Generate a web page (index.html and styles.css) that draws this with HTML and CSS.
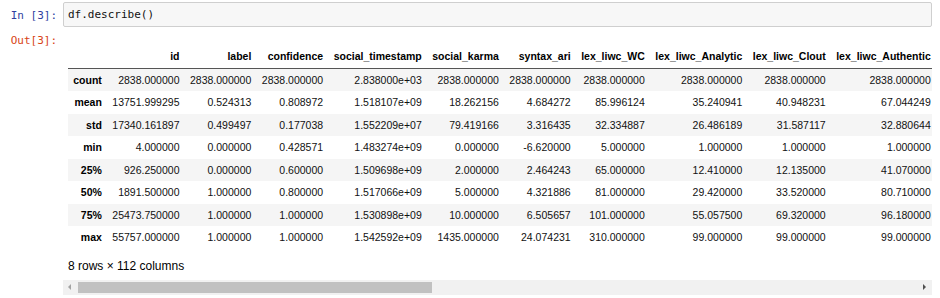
FILE: index.html
```html
<!DOCTYPE html>
<html lang="en">
<head>
  <meta charset="UTF-8">
  <title>df.describe()</title>
  <link rel="stylesheet" href="styles.css">
</head>
<body>
  <div class="cell">
    <div class="cell-row input-row">
      <div class="prompt in-prompt">In&nbsp;[3]:</div>
      <div class="input-area">df.describe()</div>
    </div>

    <div class="cell-row output-row">
      <div class="prompt out-prompt">Out[3]:</div>
      <div class="output-area">
        <div class="table-wrap">
          <table class="dataframe">
            <thead>
              <tr>
                <th></th>
                <th>id</th>
                <th>label</th>
                <th>confidence</th>
                <th>social_timestamp</th>
                <th>social_karma</th>
                <th>syntax_ari</th>
                <th>lex_liwc_WC</th>
                <th>lex_liwc_Analytic</th>
                <th>lex_liwc_Clout</th>
                <th>lex_liwc_Authentic</th>
              </tr>
            </thead>
            <tbody>
              <tr>
                <th>count</th>
                <td>2838.000000</td><td>2838.000000</td><td>2838.000000</td><td>2.838000e+03</td><td>2838.000000</td>
                <td>2838.000000</td><td>2838.000000</td><td>2838.000000</td><td>2838.000000</td><td>2838.000000</td>
              </tr>
              <tr>
                <th>mean</th>
                <td>13751.999295</td><td>0.524313</td><td>0.808972</td><td>1.518107e+09</td><td>18.262156</td>
                <td>4.684272</td><td>85.996124</td><td>35.240941</td><td>40.948231</td><td>67.044249</td>
              </tr>
              <tr>
                <th>std</th>
                <td>17340.161897</td><td>0.499497</td><td>0.177038</td><td>1.552209e+07</td><td>79.419166</td>
                <td>3.316435</td><td>32.334887</td><td>26.486189</td><td>31.587117</td><td>32.880644</td>
              </tr>
              <tr>
                <th>min</th>
                <td>4.000000</td><td>0.000000</td><td>0.428571</td><td>1.483274e+09</td><td>0.000000</td>
                <td>-6.620000</td><td>5.000000</td><td>1.000000</td><td>1.000000</td><td>1.000000</td>
              </tr>
              <tr>
                <th>25%</th>
                <td>926.250000</td><td>0.000000</td><td>0.600000</td><td>1.509698e+09</td><td>2.000000</td>
                <td>2.464243</td><td>65.000000</td><td>12.410000</td><td>12.135000</td><td>41.070000</td>
              </tr>
              <tr>
                <th>50%</th>
                <td>1891.500000</td><td>1.000000</td><td>0.800000</td><td>1.517066e+09</td><td>5.000000</td>
                <td>4.321886</td><td>81.000000</td><td>29.420000</td><td>33.520000</td><td>80.710000</td>
              </tr>
              <tr>
                <th>75%</th>
                <td>25473.750000</td><td>1.000000</td><td>1.000000</td><td>1.530898e+09</td><td>10.000000</td>
                <td>6.505657</td><td>101.000000</td><td>55.057500</td><td>69.320000</td><td>96.180000</td>
              </tr>
              <tr>
                <th>max</th>
                <td>55757.000000</td><td>1.000000</td><td>1.000000</td><td>1.542592e+09</td><td>1435.000000</td>
                <td>24.074231</td><td>310.000000</td><td>99.000000</td><td>99.000000</td><td>99.000000</td>
              </tr>
            </tbody>
          </table>
        </div>

        <p class="shape">8 rows × 112 columns</p>

        <!-- horizontal scrollbar of the output area -->
        <div class="hscroll">
          <span class="arrow arrow-left"></span>
          <div class="track">
            <div class="thumb"></div>
          </div>
          <span class="arrow arrow-right"></span>
        </div>
      </div>
    </div>
  </div>
</body>
</html>
```

FILE: styles.css
```css
body {
  margin: 0;
  background-color: #fff;
  font-family: 'Liberation Sans', Arial, sans-serif;
  color: #000;
}
.cell {
  padding: 2px 8px 0 0;
}
.cell-row {
  display: flex;
  align-items: flex-start;
}
.prompt {
  width: 57px;
  flex: none;
  padding-right: 6px;
  text-align: right;
  font-family: 'DejaVu Sans Mono', 'Liberation Mono', monospace;
  font-size: 11px;
  line-height: 13px;
}
.in-prompt {
  color: #303f9f;
  padding-top: 7px;
}
.out-prompt {
  color: #d84315;
  padding-top: 6px;
}
.input-area {
  flex: 1;
  height: 25px;
  box-sizing: border-box;
  padding: 5px 4px;
  background-color: #f7f7f7;
  border: 1px solid #cfcfcf;
  border-radius: 2px;
  font-family: 'DejaVu Sans Mono', 'Liberation Mono', monospace;
  font-size: 11px;
  line-height: 13px;
  color: #111;
}
.output-row {
  margin-top: 1px;
}
.output-area {
  flex: 1;
  min-width: 0;
  overflow: hidden;
}
.table-wrap {
  padding: 17px 0 0 5px;
}
.dataframe {
  border-collapse: collapse;
  border-spacing: 0;
  font-size: 10.5px;
  color: #111;
}
.dataframe th,
.dataframe td {
  text-align: right;
  vertical-align: middle;
  padding: 0.5em 0.5em;
  line-height: normal;
  white-space: nowrap;
}
.dataframe th {
  font-weight: bold;
  color: #000;
}
.dataframe thead {
  border-bottom: 1px solid #555;
}
.dataframe tbody tr:nth-child(odd) {
  background-color: #f5f5f5;
}
.shape {
  margin: 10px 0 0 5px;
  font-size: 12px;
  line-height: 14px;
}
.hscroll {
  display: flex;
  align-items: center;
  height: 15px;
  margin-top: 7px;
  background-color: #f1f1f1;
}
.track {
  flex: 1;
  height: 11px;
  margin: 0 2px;
}
.thumb {
  width: 354px;
  height: 11px;
  margin-left: 5px;
  background-color: #c1c1c1;
}
.arrow {
  width: 0;
  height: 0;
  flex: none;
  border-top: 3px solid transparent;
  border-bottom: 3px solid transparent;
}
.arrow-left {
  margin-left: 5px;
  border-right: 3px solid #a3a3a3;
}
.arrow-right {
  margin-right: 6px;
  border-left: 3px solid #505050;
}
```
